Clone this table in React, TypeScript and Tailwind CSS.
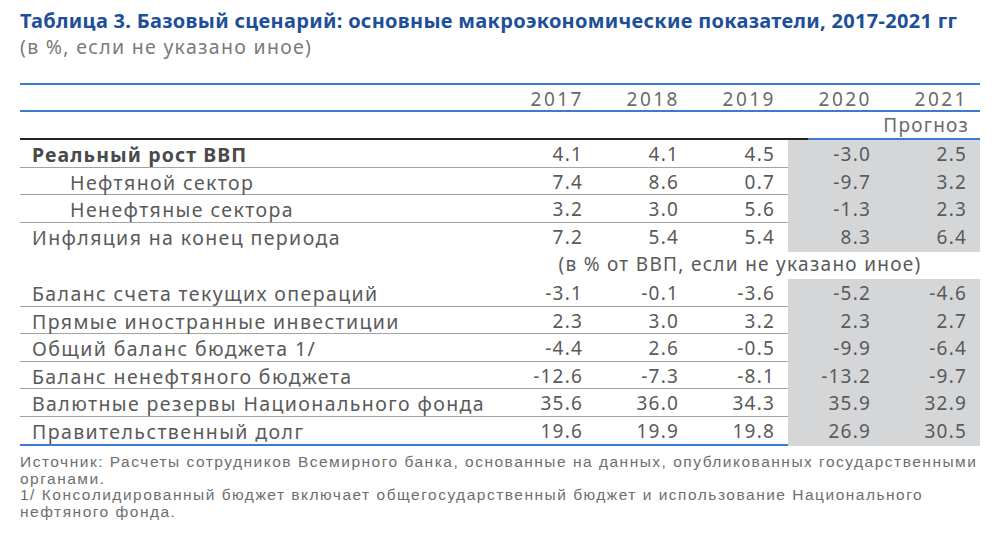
const years = ["2017", "2018", "2019", "2020", "2021"];

type Row = { label: string; vals: string[]; bold?: boolean; indent?: boolean };

const top: Row[] = [
  { label: "Реальный рост ВВП", vals: ["4.1", "4.1", "4.5", "-3.0", "2.5"], bold: true },
  { label: "Нефтяной сектор", vals: ["7.4", "8.6", "0.7", "-9.7", "3.2"], indent: true },
  { label: "Ненефтяные сектора", vals: ["3.2", "3.0", "5.6", "-1.3", "2.3"], indent: true },
  { label: "Инфляция на конец периода", vals: ["7.2", "5.4", "5.4", "8.3", "6.4"] },
];

const bottom: Row[] = [
  { label: "Баланс счета текущих операций", vals: ["-3.1", "-0.1", "-3.6", "-5.2", "-4.6"] },
  { label: "Прямые иностранные инвестиции", vals: ["2.3", "3.0", "3.2", "2.3", "2.7"] },
  { label: "Общий баланс бюджета 1/", vals: ["-4.4", "2.6", "-0.5", "-9.9", "-6.4"] },
  { label: "Баланс ненефтяного бюджета", vals: ["-12.6", "-7.3", "-8.1", "-13.2", "-9.7"] },
  { label: "Валютные резервы Национального фонда", vals: ["35.6", "36.0", "34.3", "35.9", "32.9"] },
  { label: "Правительственный долг", vals: ["19.6", "19.9", "19.8", "26.9", "30.5"] },
];

function TableRow({ r, last }: { r: Row; last: boolean }) {
  return (
    <div className={`grid grid-cols-[480px_repeat(5,96px)] h-[27.5px] ${last ? "" : "border-b-[1.5px] border-[#a3a3a3]"}`}>
      <div
        className={`flex items-center text-[19.5px] ${r.indent ? "pl-[50px]" : "pl-[12px]"} ${
          r.bold ? "font-bold tracking-[1.1px] text-[#4a4a4a]" : "tracking-[1.4px]"
        }`}
      >
        {r.label}
      </div>
      {r.vals.map((v, i) => (
        <div key={i} className={`flex items-center justify-end pr-[13px] tracking-[1.2px] ${i >= 3 ? "bg-[#d5d6d8]" : ""}`}>
          {v}
        </div>
      ))}
    </div>
  );
}

export default function App() {
  return (
    <div className="w-[1000px] h-[543px] bg-white pt-[8px] pl-[20px] text-[#5a5a5a]" style={{ fontFamily: '"Noto Sans", sans-serif' }}>
      <h1 className="text-[20px] leading-[26px] font-bold tracking-[0.3px] text-[#1d4f9a]">
        Таблица 3. Базовый сценарий: основные макроэкономические показатели, 2017-2021 гг
      </h1>
      <p className="text-[19.5px] leading-[26px] tracking-[1.3px] text-[#7a7a7a]">(в %, если не указано иное)</p>

      <div className="w-[960px] mt-[23px] text-[19px]">
        <div className="h-[2px] bg-[#3c79d1]" />
        <div className="grid grid-cols-[480px_repeat(5,96px)] h-[25px] text-[#6a6a6a]">
          <div />
          {years.map((y) => (
            <div key={y} className="flex items-center justify-end pr-[12px] tracking-[2.5px]">{y}</div>
          ))}
        </div>
        <div className="h-[2px] bg-[#3c79d1]" />
        <div className="h-[26px] flex items-center justify-end pr-[11px] tracking-[1.2px] text-[#6a6a6a]">Прогноз</div>
        <div className="flex h-[2px]">
          <div className="w-[788px] bg-[#222]" />
          <div className="flex-1 bg-[#3c79d1]" />
        </div>

        {top.map((r, i) => (
          <TableRow key={r.label} r={r} last={i === top.length - 1} />
        ))}
        <div className="grid grid-cols-[480px_480px] h-[29px]">
          <div />
          <div className="flex items-center justify-center tracking-[1.3px]">(в % от ВВП, если не указано иное)</div>
        </div>
        {bottom.map((r, i) => (
          <TableRow key={r.label} r={r} last={i === bottom.length - 1} />
        ))}
        <div className="h-[2px] bg-[#3c79d1]" />
      </div>

      <div
        className="mt-[8px] w-[975px] text-[15.5px] leading-[16.7px] tracking-[1.5px] text-[#6e6e6e] whitespace-nowrap"
        style={{ fontFamily: '"Liberation Sans Narrow", "Liberation Sans", sans-serif' }}
      >
        <p>Источник: Расчеты сотрудников Всемирного банка, основанные на данных, опубликованных государственными</p>
        <p>органами.</p>
        <p>1/ Консолидированный бюджет включает общегосударственный бюджет и использование Национального</p>
        <p>нефтяного фонда.</p>
      </div>
    </div>
  );
}
